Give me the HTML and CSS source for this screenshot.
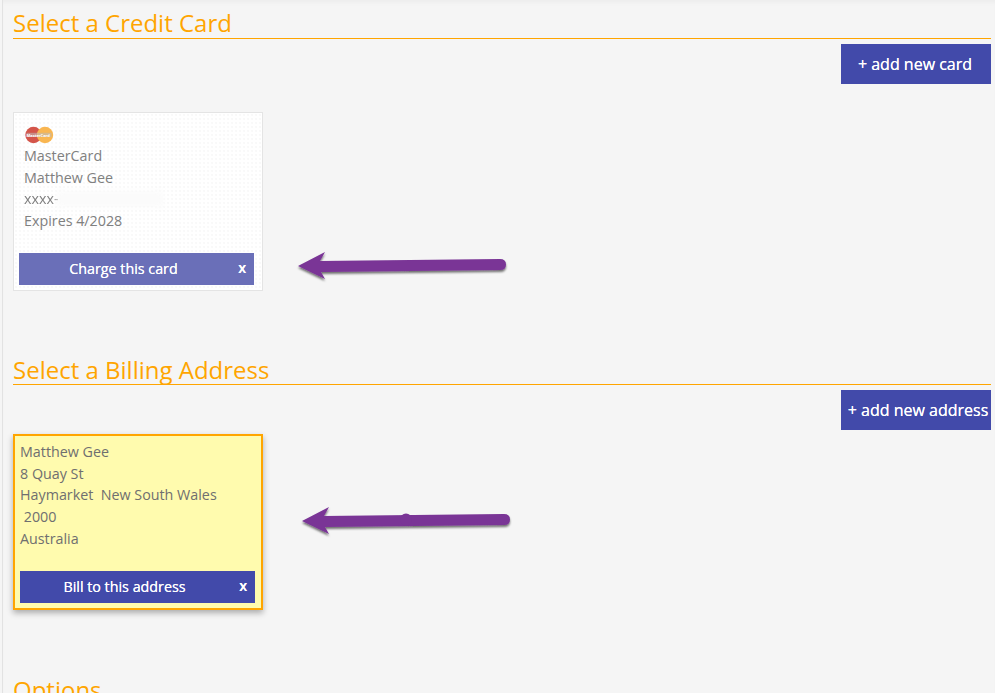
FILE: index.html
```html
<!DOCTYPE html>
<html lang="en">
<head>
<meta charset="utf-8">
<title>Select a Credit Card</title>
<link rel="stylesheet" href="styles.css">
</head>
<body>
<main class="page">
  <section class="section section-card">
    <h2 class="heading">Select a Credit Card</h2>
    <div class="actions"><a class="add-btn add-btn-card">+ add new card</a></div>
    <div class="arrow-row">
      <article class="tile tile-card">
        <svg class="card-logo" width="30" height="18" viewBox="0 0 30 18" aria-hidden="true">
          <circle cx="8.500" cy="9" r="8.200" fill="#d4554a"/>
          <circle cx="20" cy="9" r="8.200" fill="#f9b651"/>
          <rect x="1.500" y="6.800" width="25" height="4.200" fill="#bbb" opacity=".55"/>
          <text x="1.500" y="10.500" class="logo-text">MasterCard</text>
        </svg>
        <div class="tile-lines">
          <div>MasterCard</div>
          <div>Matthew Gee</div>
          <div class="masked"><span class="masked-x">xxxx-</span><span class="smudge"></span></div>
          <div>Expires 4/2028</div>
        </div>
        <div class="tile-btn tile-btn-faded"><span>Charge this card</span><b class="close">x</b></div>
      </article>
      <svg class="arrow arrow-one" width="226" height="46" viewBox="0 0 226 46" aria-hidden="true">
        <use href="#arrow-shape"/>
      </svg>
    </div>
  </section>

  <section class="section section-address">
    <h2 class="heading">Select a Billing Address</h2>
    <div class="actions"><a class="add-btn add-btn-tight">+ add new address</a></div>
    <div class="arrow-row">
      <article class="tile tile-selected">
        <div class="tile-lines">
          <div>Matthew Gee</div>
          <div>8 Quay St</div>
          <div>Haymarket&nbsp; New South Wales</div>
          <div>&nbsp;2000</div>
          <div>Australia</div>
        </div>
        <div class="tile-btn"><span>Bill to this address</span><b class="close">x</b></div>
      </article>
      <svg class="arrow arrow-two" width="226" height="46" viewBox="0 0 226 46" aria-hidden="true">
        <use href="#arrow-shape"/>
        <circle cx="106" cy="24.500" r="6" fill="#7a3596"/>
      </svg>
    </div>
  </section>

  <section class="section section-options">
    <h2 class="heading">Options</h2>
  </section>
</main>
<svg width="0" height="0" class="defs" aria-hidden="true">
  <defs>
    <filter id="arrow-shadow" x="-5%" y="-20%" width="110%" height="160%">
      <feDropShadow dx="0" dy="2" stdDeviation="1.300" flood-color="#000" flood-opacity=".55"/>
    </filter>
    <path id="arrow-shape" filter="url(#arrow-shadow)" fill="#7a3596" d="M2 26 L29 12 L24 21 L204 19 Q210 19 210 24.500 Q210 30 204 30 L25 32 L29 39 Z"/>
  </defs>
</svg>
</body>
</html>
```
FILE: styles.css
```css
* { box-sizing: border-box; }
html, body { margin: 0; height: 693px; overflow: hidden; }
body {
  background: #f5f5f5;
  font-family: "Open Sans", "Liberation Sans", sans-serif;
  font-size: 14.3px;
  color: #808080;
}
.page {
  height: 693px;
  margin-left: 2px;
  padding: 0 4px 0 10px;
  border-left: 1px solid #e2e2e2;
  box-shadow: inset 0 5px 4px -3px #ebebeb;
  overflow: hidden;
}
.heading {
  margin: 0;
  height: 33px;
  font-size: 24px;
  font-weight: 400;
  line-height: 33px;
  color: #ffa500;
  border-bottom: 1px solid #ffa500;
}
.section-card { padding-top: 6px; }
.section-address { padding-top: 61px; }
.section-address .heading { line-height: 35px; }
.section-options { padding-top: 63px; }
.section-options .heading { border-bottom: 0; }
.actions { display: flex; justify-content: flex-end; padding-top: 5px; }
.add-btn {
  display: flex;
  align-items: center;
  justify-content: center;
  width: 150px;
  height: 40px;
  background: #424aaa;
  color: #fff;
  font-size: 16px;
  font-weight: 500;
  text-shadow: 0 0 0.5px #fff;
  white-space: nowrap;
}
.add-btn-card { padding-right: 2px; }
.add-btn-tight { padding-left: 4px; }
.arrow-row { position: relative; }
.tile {
  display: flex;
  flex-direction: column;
  width: 250px;
  border: 1px solid #e4e4e4;
}
.tile-card {
  margin-top: 28px;
  height: 179px;
  padding: 13px 8px 5px 5px;
  background-color: #fff;
  background-image: radial-gradient(#f9f9f9 0.7px, transparent 0.8px);
  background-size: 4px 4px;
}
.tile-selected {
  margin-top: 4px;
  height: 176px;
  padding: 5px 6px 5px 5px;
  background: #fffbae;
  border: 2px solid #ffa500;
  box-shadow: 0 3px 6px rgba(0, 0, 0, .3);
  color: #6f6f70;
}
.card-logo { display: block; margin-left: 6px; flex: none; }
.logo-text { font-size: 4px; font-weight: 700; fill: #fff; }
.tile-lines { line-height: 21.7px; flex: 1; }
.tile-card .tile-lines { padding-left: 5px; padding-top: 1px; }
.masked { position: relative; }
.masked-x { filter: blur(0.3px); }
.smudge {
  position: absolute;
  left: 33px;
  top: 3px;
  width: 106px;
  height: 16px;
  background: #fbfbfb;
  filter: blur(3px);
}
.tile-btn {
  position: relative;
  flex: none;
  height: 32px;
  width: 235px;
  display: flex;
  align-items: center;
  justify-content: center;
  background: #424aaa;
  color: #fff;
  font-weight: 500;
  text-shadow: 0 0 0.5px #fff;
  padding: 0 26px 2px 0;
}
.tile-btn-faded { background: #6a6fb8; }
.close {
  position: absolute;
  right: 8px;
  top: 5px;
  font-weight: 600;
}
.arrow { position: absolute; }
.arrow-one { left: 283px; top: 128px; }
.arrow-two { left: 287px; top: 61px; }
.defs { position: absolute; }
```
